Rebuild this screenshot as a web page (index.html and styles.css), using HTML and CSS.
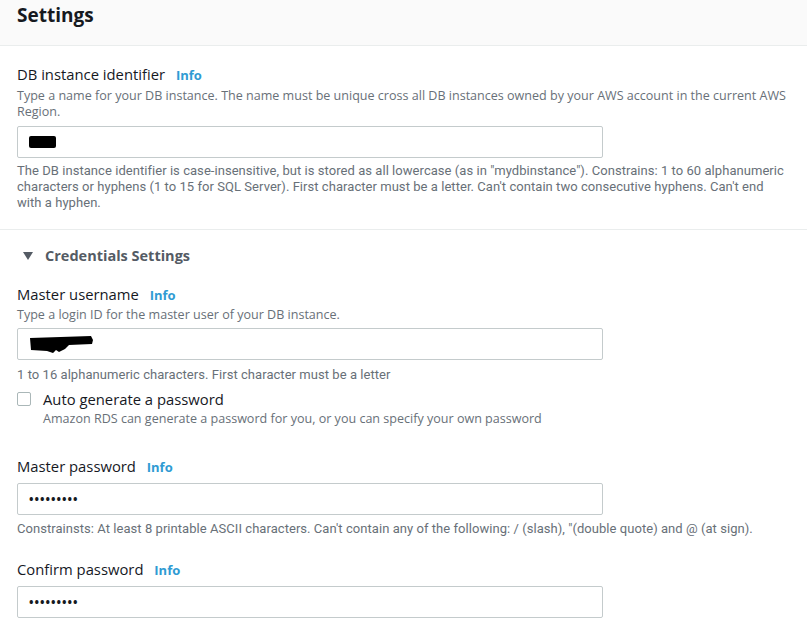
FILE: index.html
```html
<!DOCTYPE html>
<html>
<head>
<meta charset="utf-8">
<link rel="stylesheet" href="styles.css">
</head>
<body>
<div class="header"><h2 class="title">Settings</h2></div>

<div class="section first">
  <div class="label">DB instance identifier <span class="info">Info</span></div>
  <div class="desc">Type a name for your DB instance. The name must be unique cross all DB instances owned by your AWS account in the current AWS Region.</div>
  <div class="input"><span class="redact1"></span></div>
  <div class="help">The DB instance identifier is case-insensitive, but is stored as all lowercase (as in "mydbinstance"). Constrains: 1 to 60 alphanumeric characters or hyphens (1 to 15 for SQL Server). First character must be a letter. Can't contain two consecutive hyphens. Can't end with a hyphen.</div>
</div>

<div class="section">
  <div class="expander"><span class="caret"></span><span>Credentials Settings</span></div>

  <div class="label l2">Master username <span class="info">Info</span></div>
  <div class="desc d2">Type a login ID for the master user of your DB instance.</div>
  <div class="input i2">
    <svg class="redact2" width="66" height="20" viewBox="0 0 66 20"><path d="M1 3 L62 1 L64 5 L63 9 L40 10 L36 14 L30 17 L27 15 L24 18 L18 16 L2 15 Z" fill="#000"/></svg>
  </div>
  <div class="help h2">1 to 16 alphanumeric characters. First character must be a letter</div>

  <div class="check">
    <span class="box"></span>
    <div class="checktext">
      <div class="checklabel">Auto generate a password</div>
      <div class="desc">Amazon RDS can generate a password for you, or you can specify your own password</div>
    </div>
  </div>

  <div class="label l3">Master password <span class="info">Info</span></div>
  <div class="input i3"><span class="dots">•••••••••</span></div>
  <div class="help h3">Constrainsts: At least 8 printable ASCII characters. Can't contain any of the following: / (slash), "(double quote) and @ (at sign).</div>

  <div class="label l4">Confirm password <span class="info">Info</span></div>
  <div class="input i3"><span class="dots">•••••••••</span></div>
</div>
</body>
</html>
```
FILE: styles.css
```css
html, body {
  margin: 0;
  padding: 0;
  background: #ffffff;
  font-family: "Open Sans", "Noto Sans", sans-serif;
  color: #16191f;
}
.header {
  height: 45px;
  background: #fafafa;
  border-bottom: 1px solid #eaeded;
  padding: 0 17px;
}
.title {
  margin: 0;
  font-size: 19px;
  font-weight: 700;
  line-height: 30px;
  color: #16191f;
}
.section {
  padding: 0 17px;
}
.section.first {
  padding-top: 18px;
  padding-bottom: 18px;
  border-bottom: 1px solid #eaeded;
}
.label {
  font-size: 14.8px;
  line-height: 20px;
  color: #16191f;
}
.info {
  font-size: 13px;
  font-weight: 700;
  color: #2f9bd3;
  margin-left: 7px;
}
.desc {
  font-size: 12.55px;
  line-height: 16px;
  color: #687078;
  margin-top: 3px;
  margin-right: -5px;
}
.input {
  box-sizing: border-box;
  width: 586px;
  height: 32px;
  border: 1px solid #c4cbcc;
  border-radius: 2px;
  margin-top: 6px;
  display: flex;
  align-items: center;
  padding-left: 11px;
}
.redact1 {
  display: block;
  width: 27px;
  height: 12px;
  background: #000;
  border-radius: 2px;
}
.help {
  font-family: Roboto, "Liberation Sans", sans-serif;
  font-size: 13px;
  line-height: 16px;
  color: #687078;
  margin-top: 5px;
  letter-spacing: 0.05px;
}
.expander {
  display: flex;
  align-items: center;
  padding-top: 16px;
  font-size: 14.5px;
  line-height: 20px;
  font-weight: 700;
  color: #545b64;
}
.caret {
  width: 0;
  height: 0;
  border-left: 5px solid transparent;
  border-right: 5px solid transparent;
  border-top: 8px solid #545b64;
  margin-left: 6px;
  margin-right: 12px;
}
.l2 { margin-top: 18px; }
.d2 { margin-top: 2px; }
.i2 { margin-top: 5px; height: 32px; }
.redact2 { display: block; margin-top: 2px; }
.h2 { margin-top: 7px; }
.check {
  display: flex;
  align-items: flex-start;
  margin-top: 6px;
}
.box {
  box-sizing: border-box;
  width: 14px;
  height: 14px;
  border: 1px solid #aab7b8;
  border-radius: 2px;
  margin-top: 3px;
  margin-right: 12px;
  flex: none;
}
.checklabel {
  font-size: 14.8px;
  line-height: 20px;
  color: #16191f;
}
.checktext .desc { margin-top: 2px; }
.l3 { margin-top: 29px; }
.l4 { margin-top: 22px; }
.i3 { margin-top: 6px; }
.dots {
  font-size: 12px;
  font-weight: 700;
  letter-spacing: 1px;
  color: #16191f;
}
.h3 { margin-top: 6px; }
```
